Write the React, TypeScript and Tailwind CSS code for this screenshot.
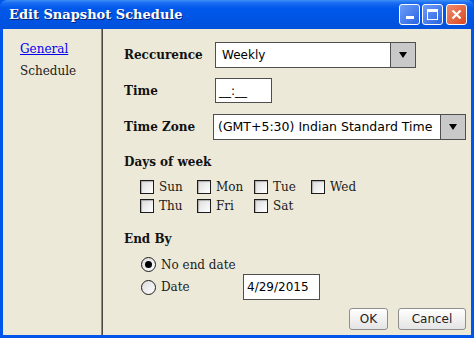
import React from "react";

const serif = { fontFamily: '"DejaVu Serif", serif' };
const sans = { fontFamily: '"DejaVu Sans", sans-serif' };

function Arrow() {
  return (
    <svg width="10" height="8" viewBox="0 0 10 8">
      <polygon points="1,1 9,1 5,7" fill="#000" />
    </svg>
  );
}

function Checkbox({ label }: { label: string }) {
  return (
    <div className="flex items-center h-[19px]">
      <div className="w-[14px] h-[14px] border border-[#1c1c1c] bg-gradient-to-br from-[#dcdcdc] to-white shadow-[inset_1px_1px_1px_rgba(0,0,0,0.25)]" />
      <span className="ml-[5px] text-[12px] text-[#1a1a1a]" style={serif}>{label}</span>
    </div>
  );
}

function Radio({ checked, label }: { checked?: boolean; label: string }) {
  return (
    <div className="flex items-center">
      <div className="w-[15px] h-[15px] rounded-full border border-[#1c1c1c] bg-gradient-to-br from-[#dcdcdc] to-white flex items-center justify-center">
        {checked && <div className="w-[7px] h-[7px] rounded-full bg-black" />}
      </div>
      <span className="ml-[5px] text-[12px] text-[#1a1a1a]" style={serif}>{label}</span>
    </div>
  );
}

export default function App() {
  return (
    <div className="w-[474px] h-[338px] flex flex-col bg-[#0055ea] overflow-hidden">
      {/* Title bar */}
      <div className="h-[29px] shrink-0 flex items-center rounded-t-[7px] bg-[linear-gradient(to_bottom,#3d8ff7_0px,#1a6cf2_3px,#0058ec_8px,#0054e3_20px,#0050dc_29px)] relative">
        <span
          className="ml-[9px] text-[13px] font-bold text-white [text-shadow:1px_1px_0_#0a1f70]"
          style={serif}
        >
          Edit Snapshot Schedule
        </span>
        <div className="ml-auto mr-[7px] flex gap-[2px]">
          <div className="w-[21px] h-[21px] rounded-[3px] border border-white bg-gradient-to-br from-[#6e9df7] to-[#2a62e2] flex items-end justify-center pb-[5px]">
            <div className="w-[8px] h-[3px] bg-white" />
          </div>
          <div className="w-[21px] h-[21px] rounded-[3px] border border-white bg-gradient-to-br from-[#6e9df7] to-[#2a62e2] flex items-center justify-center">
            <div className="w-[11px] h-[11px] border border-white border-t-[3px]" />
          </div>
          <div className="ml-[1px] w-[21px] h-[21px] rounded-[3px] border border-white bg-gradient-to-br from-[#f08a6a] to-[#d9461d] flex items-center justify-center">
            <svg width="11" height="11" viewBox="0 0 11 11">
              <path d="M1.5 1.5 L9.5 9.5 M9.5 1.5 L1.5 9.5" stroke="#fff" strokeWidth="2.2" />
            </svg>
          </div>
        </div>
      </div>

      {/* Body */}
      <div className="flex-1 flex ml-[3px] mr-[3px] mb-[3px] bg-[#ece9d8]">
        {/* Sidebar */}
        <div className="w-[98px] shrink-0 flex flex-col pl-[17px] pt-[12px] gap-[6px] text-[12px]" style={serif}>
          <span className="text-[#0000ee] underline leading-[16px]">General</span>
          <span className="text-[#1a1a1a] leading-[16px]">Schedule</span>
        </div>
        <div className="w-[1px] bg-[#8a8882]" />
        <div className="w-[1px] bg-[#4a4a46]" />

        {/* Main */}
        <div className="flex-1 flex flex-col pl-[21px] pr-[5px]">
          {/* Reccurence */}
          <div className="flex items-center mt-[13px] h-[26px]">
            <span className="w-[91px] text-[12px] font-bold text-[#111]" style={serif}>Reccurence</span>
            <div className="w-[201px] h-[26px] flex border border-[#4f4f4f] bg-white">
              <span className="flex-1 flex items-center pl-[6px] text-[12px] text-black" style={sans}>Weekly</span>
              <div className="w-[25px] bg-[#c9c9c9] border-l border-[#4f4f4f] flex items-center justify-center">
                <Arrow />
              </div>
            </div>
          </div>

          {/* Time */}
          <div className="flex items-center mt-[10px] h-[25px]">
            <span className="w-[91px] text-[12px] font-bold text-[#111]" style={serif}>Time</span>
            <div className="w-[57px] h-[25px] border border-[#4f4f4f] bg-white flex items-center pl-[3px] text-[12px] text-black" style={sans}>
              __:__
            </div>
          </div>

          {/* Time Zone */}
          <div className="flex items-center mt-[11px] h-[26px]">
            <span className="w-[89px] text-[12px] font-bold text-[#111]" style={serif}>Time Zone</span>
            <div className="w-[253px] h-[26px] flex border border-[#4f4f4f] bg-white">
              <span className="flex-1 flex items-center pl-[4px] text-[12.5px] text-black whitespace-nowrap" style={sans}>
                (GMT+5:30) Indian Standard Time
              </span>
              <div className="w-[25px] bg-[#c9c9c9] border-l border-[#4f4f4f] flex items-center justify-center">
                <Arrow />
              </div>
            </div>
          </div>

          {/* Days of week */}
          <span className="mt-[14px] text-[12px] font-bold text-[#111] leading-[16px]" style={serif}>Days of week</span>
          <div className="mt-[7px] ml-[16px] grid grid-cols-[57px_57px_57px_57px]">
            <Checkbox label="Sun" />
            <Checkbox label="Mon" />
            <Checkbox label="Tue" />
            <Checkbox label="Wed" />
            <Checkbox label="Thu" />
            <Checkbox label="Fri" />
            <Checkbox label="Sat" />
          </div>

          {/* End By */}
          <span className="mt-[16px] text-[12px] font-bold text-[#111] leading-[16px]" style={serif}>End By</span>
          <div className="mt-[9px] ml-[17px] flex flex-col">
            <div className="h-[17px] flex items-center">
              <Radio checked label="No end date" />
            </div>
            <div className="h-[28px] flex items-center">
              <div className="w-[102px]">
                <Radio label="Date" />
              </div>
              <div className="w-[77px] h-[26px] border border-[#4f4f4f] bg-white flex items-center pl-[3px] text-[12px] text-black" style={sans}>
                4/29/2015
              </div>
            </div>
          </div>

          {/* Buttons */}
          <div className="flex justify-end gap-[10px] mt-[7px]">
            <div className="w-[39px] h-[22px] rounded-[3px] border border-[#8e8e8e] bg-gradient-to-b from-white to-[#e4e4e4] flex items-center justify-center text-[12px] text-[#222]" style={sans}>
              OK
            </div>
            <div className="w-[68px] h-[22px] rounded-[3px] border border-[#8e8e8e] bg-gradient-to-b from-white to-[#e4e4e4] flex items-center justify-center text-[12px] text-[#222]" style={sans}>
              Cancel
            </div>
          </div>
        </div>
      </div>
    </div>
  );
}
